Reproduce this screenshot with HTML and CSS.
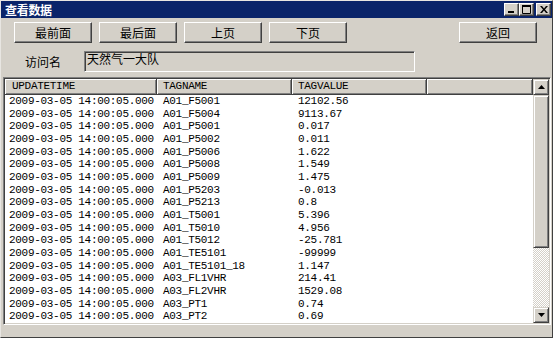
FILE: index.html
```html
<!DOCTYPE html>
<html lang="zh-CN">
<head>
  <meta charset="UTF-8">
  <title>查看数据</title>
  <link rel="stylesheet" href="styles.css">
</head>
<body>

<div class="window">
  <div class="titlebar">
    <span class="title">查看数据</span>
    <div class="controls">
      <span class="ctl">
        <svg width="8" height="7" viewBox="0 0 8 7"><rect x="0" y="5" width="6" height="2" fill="#000"/></svg>
      </span>
      <span class="ctl">
        <svg width="9" height="9" viewBox="0 0 9 9"><path d="M0.5 0.5h8v8h-8z" fill="none" stroke="#000"/><rect x="0" y="0" width="9" height="2" fill="#000"/></svg>
      </span>
      <span class="ctl close">
        <svg width="8" height="7" viewBox="0 0 8 7"><path d="M0 0h2l2 2.5L6 0h2L5 3.5 8 7H6L4 4.5 2 7H0l3-3.5z" fill="#000"/></svg>
      </span>
    </div>
  </div>

  <div class="toolbar">
    <button class="btn">最前面</button>
    <button class="btn">最后面</button>
    <button class="btn">上页</button>
    <button class="btn">下页</button>
    <button class="btn back">返回</button>
  </div>

  <div class="field">
    <label class="field-label">访问名</label>
    <div class="field-input">天然气一大队</div>
  </div>

  <div class="list">
    <div class="grid">
      <div class="row head">
        <div class="cell">UPDATETIME</div>
        <div class="cell">TAGNAME</div>
        <div class="cell">TAGVALUE</div>
        <div class="cell"></div>
      </div>
      <div id="rows"></div>
    </div>
    <div class="vscroll">
      <span class="sbtn">
        <svg width="7" height="4" viewBox="0 0 7 4"><path d="M3.5 0L7 4H0z" fill="#000"/></svg>
      </span>
      <span class="thumb"></span>
      <span class="track"></span>
      <span class="sbtn">
        <svg width="7" height="4" viewBox="0 0 7 4"><path d="M0 0h7L3.5 4z" fill="#000"/></svg>
      </span>
    </div>
  </div>
</div>

<script>
  const data = [
    ['A01_F5001', '12102.56'],
    ['A01_F5004', '9113.67'],
    ['A01_P5001', '0.017'],
    ['A01_P5002', '0.011'],
    ['A01_P5006', '1.622'],
    ['A01_P5008', '1.549'],
    ['A01_P5009', '1.475'],
    ['A01_P5203', '-0.013'],
    ['A01_P5213', '0.8'],
    ['A01_T5001', '5.396'],
    ['A01_T5010', '4.956'],
    ['A01_T5012', '-25.781'],
    ['A01_TE5101', '-99999'],
    ['A01_TE5101_18', '1.147'],
    ['A03_FL1VHR', '214.41'],
    ['A03_FL2VHR', '1529.08'],
    ['A03_PT1', '0.74'],
    ['A03_PT2', '0.69']
  ];

  const rows = document.getElementById('rows');
  data.forEach(function (d) {
    const row = document.createElement('div');
    row.className = 'row';
    [ '2009-03-05 14:00:05.000', d[0], d[1], '' ].forEach(function (t) {
      const c = document.createElement('div');
      c.className = 'cell';
      c.textContent = t;
      row.appendChild(c);
    });
    rows.appendChild(row);
  });
</script>

</body>
</html>
```

FILE: styles.css
```css
* {
  box-sizing: border-box;
}

body {
  margin: 0;
  font-family: "Noto Sans CJK SC", "Liberation Sans", sans-serif;
  font-size: 12px;
  background: #d4d0c8;
}

.window {
  width: 553px;
  height: 338px;
  background: #d4d0c8;
  border: 1px solid;
  border-color: #e8e6e2 #404040 #404040 #e8e6e2;
  display: flex;
  flex-direction: column;
}

/* title bar */
.titlebar {
  height: 17px;
  background: #0a246a;
  display: flex;
  align-items: center;
  justify-content: space-between;
  padding: 0 1px 0 4px;
}

.title {
  color: #fff;
  font-weight: bold;
  font-size: 12px;
  line-height: 14px;
  letter-spacing: -0.3px;
}

.controls {
  display: flex;
}

.ctl {
  width: 15px;
  height: 13px;
  background: #d4d0c8;
  border: 1px solid;
  border-color: #fff #404040 #404040 #fff;
  box-shadow: inset -1px -1px #808080;
  display: flex;
  align-items: center;
  justify-content: center;
}

.close {
  margin-left: 2px;
}

/* buttons */
.toolbar {
  display: flex;
  gap: 7px;
  margin-top: 4px;
  padding: 0 15px 0 13px;
}

.btn {
  width: 78px;
  height: 21px;
  padding: 0;
  background: #d4d0c8;
  border: 1px solid;
  border-color: #fff #404040 #404040 #fff;
  box-shadow: inset -1px -1px #808080;
  font-family: "Noto Sans CJK SC", sans-serif;
  font-size: 12px;
  color: #000;
}

.back {
  margin-left: auto;
}

/* name field */
.field {
  display: flex;
  align-items: center;
  margin-top: 8px;
  padding-left: 24px;
}

.field-label {
  width: 59px;
  font-size: 12px;
}

.field-input {
  width: 331px;
  height: 21px;
  border: 1px solid;
  border-color: #808080 #fff #fff #808080;
  box-shadow: inset 1px 1px #404040;
  padding: 0 0 0 2px;
  font-size: 12px;
  line-height: 14px;
}

/* list view */
.list {
  height: 248px;
  margin: 5px 1px 0 2px;
  border: 1px solid;
  border-color: #808080 #fff #fff #808080;
  box-shadow: inset 1px 1px #404040, inset -1px -1px #d4d0c8;
  padding: 1px;
  background: #fff;
  display: flex;
}

.grid {
  flex: 1;
  overflow: hidden;
  font-family: "Liberation Mono", "Noto Sans CJK SC", monospace;
  font-size: 11px;
  letter-spacing: -0.3px;
  color: #000;
}

.row {
  display: grid;
  grid-template-columns: 152px 135px 135px 1fr;
  height: 12.67px;
  line-height: 12.67px;
  white-space: nowrap;
}

.row .cell {
  padding-left: 4px;
}

.row .cell + .cell {
  padding-left: 6px;
}

.row.head {
  height: 16px;
  line-height: 14px;
}

.head .cell {
  background: #d4d0c8;
  border-right: 1px solid #404040;
  border-bottom: 1px solid #404040;
  box-shadow: inset 1px 1px #fff, inset -1px -1px #808080;
}

.head .cell:first-child {
  padding-left: 7px;
}

/* scrollbar */
.vscroll {
  width: 16px;
  display: flex;
  flex-direction: column;
}

.sbtn {
  height: 16px;
  background: #d4d0c8;
  border: 1px solid;
  border-color: #d4d0c8 #404040 #404040 #d4d0c8;
  box-shadow: inset 1px 1px #fff, inset -1px -1px #808080;
  display: flex;
  align-items: center;
  justify-content: center;
}

.thumb {
  height: 153px;
  background: #d4d0c8;
  border: 1px solid;
  border-color: #d4d0c8 #404040 #404040 #d4d0c8;
  box-shadow: inset 1px 1px #fff, inset -1px -1px #808080;
}

.track {
  flex: 1;
  background: repeating-conic-gradient(#fff 0 25%, #d4d0c8 0 50%) 0 0 / 2px 2px;
}
```
